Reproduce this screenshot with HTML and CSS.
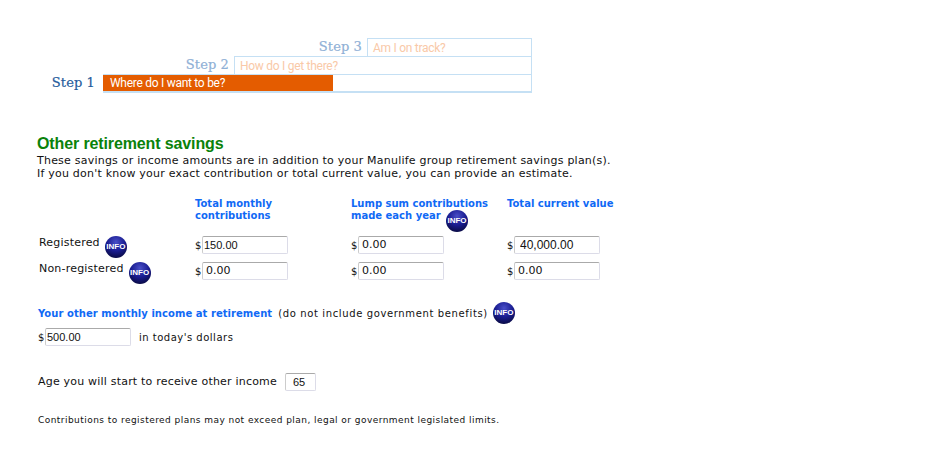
FILE: index.html
```html
<!DOCTYPE html>
<html lang="en">
<head>
<meta charset="utf-8">
<title>Other retirement savings</title>
<link rel="stylesheet" href="styles.css">
</head>
<body>
<div class="page">
  <div class="steps">
    <div class="step">
      <span class="step-label muted">Step 3</span>
      <div class="track track-3"><span class="track-text">Am I on track?</span></div>
    </div>
    <div class="step">
      <span class="step-label muted">Step 2</span>
      <div class="track track-2"><span class="track-text">How do I get there?</span></div>
    </div>
    <div class="step">
      <span class="step-label current">Step 1</span>
      <div class="track track-1"><div class="fill">Where do I want to be?</div></div>
    </div>
  </div>

  <h1 class="title">Other retirement savings</h1>
  <p class="intro">These savings or income amounts are in addition to your Manulife group retirement savings plan(s).<br>If you don't know your exact contribution or total current value, you can provide an estimate.</p>

  <div class="grid">
    <div></div>
    <div class="head">Total monthly<br>contributions</div>
    <div class="head">Lump sum contributions<br>made each year <svg class="info info-head" viewBox="0 0 22 22" role="img" aria-label="Info"><use href="#ball"/></svg><span class="info-word head-word">INFO</span></div>
    <div class="head">Total current value</div>

    <div class="label">Registered <span class="info-wrap"><svg class="info" viewBox="0 0 22 22"><use href="#ball"/></svg><span class="info-word">INFO</span></span></div>
    <div class="money"><span class="cur">$</span><input class="field tight" value="150.00"></div>
    <div class="money"><span class="cur">$</span><input class="field" value="0.00"></div>
    <div class="money"><span class="cur">$</span><input class="field wide" value="40,000.00"></div>

    <div class="label">Non-registered <span class="info-wrap"><svg class="info" viewBox="0 0 22 22"><use href="#ball"/></svg><span class="info-word">INFO</span></span></div>
    <div class="money"><span class="cur">$</span><input class="field" value="0.00"></div>
    <div class="money"><span class="cur">$</span><input class="field" value="0.00"></div>
    <div class="money"><span class="cur">$</span><input class="field" value="0.00"></div>
  </div>

  <div class="income">
    <span class="income-title">Your other monthly income at retirement</span>
    <span class="income-note">(do not include government benefits)</span>
    <span class="info-wrap"><svg class="info" viewBox="0 0 22 22"><use href="#ball"/></svg><span class="info-word">INFO</span></span>
  </div>
  <div class="income-row">
    <span class="cur">$</span><input class="field tight" value="500.00">
    <span class="today">in today's dollars</span>
  </div>

  <div class="age-row">
    <span class="age-text">Age you will start to receive other income</span>
    <input class="field age" value="65">
  </div>

  <p class="foot">Contributions to registered plans may not exceed plan, legal or government legislated limits.</p>
</div>

<svg class="defs" aria-hidden="true" width="0" height="0">
  <defs>
    <radialGradient id="ballFill" cx="50%" cy="28%" r="72%">
      <stop offset="0" stop-color="#4a4fc8"/>
      <stop offset="0.55" stop-color="#1a1d92"/>
      <stop offset="1" stop-color="#0a0b46"/>
    </radialGradient>
    <symbol id="ball" viewBox="0 0 22 22">
      <circle cx="11" cy="11" r="11" fill="url(#ballFill)"/>
    </symbol>
  </defs>
</svg>
</body>
</html>
```
FILE: styles.css
```css
html, body {
  margin: 0;
  padding: 0;
  background: #fff;
}
body {
  font-family: "DejaVu Sans", Verdana, sans-serif;
  font-size: 11px;
  color: #111;
}
.page {
  padding: 38px 0 0 37px;
  width: 800px;
}
.steps {
  width: 495px;
  display: flex;
  flex-direction: column;
  align-items: flex-end;
}
.step {
  display: flex;
  align-items: center;
  height: 18px;
}
.step:last-child { height: 19px; }
.step-label {
  font-family: "DejaVu Serif", serif;
  font-size: 13px;
  margin: -2px 5px 0 0;
  letter-spacing: 0.1px;
  white-space: nowrap;
  -webkit-text-stroke: 0.2px currentColor;
}
.current { margin-right: 8px; }
.muted { color: #8fb0d6; }
.current { color: #1f5c9c; }
.track {
  box-sizing: border-box;
  height: 100%;
  border: 1px solid #c5e0f4;
  border-bottom-width: 0;
  display: flex;
  align-items: center;
  font-family: Roboto, sans-serif;
  font-size: 12px;
  letter-spacing: -0.28px;
}
.step:last-child .track { border-bottom-width: 2px; }
.track-3 { width: 165px; }
.track-2 { width: 298px; }
.track-1 { width: 429px; }
.track-text {
  color: #f9c9a8;
  padding-left: 5px;
}
.fill {
  width: 230px;
  height: 100%;
  margin-left: -1px;
  background: #e45c00;
  color: #fff;
  padding-left: 7px;
  box-sizing: border-box;
  line-height: 17px;
}
.title {
  font-family: "Liberation Sans", Arial, sans-serif;
  font-size: 16px;
  font-weight: bold;
  letter-spacing: -0.12px;
  color: #0a820a;
  margin: 42px 0 0;
  line-height: 18px;
}
.intro {
  margin: 1px 0 0;
  line-height: 13px;
  letter-spacing: 0.22px;
  color: #111;
}
.grid {
  display: grid;
  grid-template-columns: 158px 156px 156px 156px;
  grid-template-rows: 35px 26px 26px;
  margin-top: 18px;
}
.head {
  color: #1069f5;
  font-weight: bold;
  font-size: 10px;
  line-height: 12px;
  position: relative;
  white-space: nowrap;
}
.label {
  padding: 3px 0 0 2px;
  white-space: nowrap;
  display: flex;
  align-items: flex-start;
  gap: 5px;
  height: 23px;
  letter-spacing: 0.2px;
}
.info-wrap {
  position: relative;
  display: inline-block;
  width: 22px;
  height: 22px;
  flex: none;
}
.info {
  display: block;
  width: 22px;
  height: 22px;
}
.info-word {
  position: absolute;
  left: 0;
  right: 0;
  top: 7px;
  text-align: center;
  font-family: "Liberation Sans", Arial, sans-serif;
  font-size: 8px;
  line-height: 8px;
  letter-spacing: 0;
  font-weight: bold;
  color: #fff;
}
.info-head {
  position: absolute;
  left: 95px;
  top: 12px;
}
.head-word {
  left: 95px;
  right: auto;
  width: 22px;
  top: 19px;
}
.money {
  display: flex;
  align-items: center;
  height: 19px;
  margin-top: 2px;
}
.cur {
  font-size: 10px;
  width: 7px;
  flex: none;
  padding-top: 2px;
}
.field {
  box-sizing: border-box;
  width: 86px;
  height: 18px;
  border: 1px solid #dcdce8;
  border-top-color: #aaa;
  border-left-color: #ccc;
  border-radius: 2px;
  padding: 0 0 0 3px;
  margin: 0;
  font-family: "DejaVu Sans", Verdana, sans-serif;
  font-size: 11px;
  color: #111;
  background: #fff;
  outline: none;
}
.tight { padding-left: 1px; font-family: "Liberation Sans", Arial, sans-serif; font-size: 11px; }
.wide { padding-left: 5px; font-family: "Liberation Sans", Arial, sans-serif; font-size: 12px; }
.income {
  display: flex;
  align-items: center;
  height: 22px;
  margin: 17px 0 0 1px;
  white-space: nowrap;
}
.income-title {
  color: #1069f5;
  font-weight: bold;
  font-size: 10px;
  letter-spacing: 0.05px;
}
.income-note {
  font-size: 10px;
  letter-spacing: 0.63px;
  margin: 0 5px 0 6px;
}
.income-row {
  display: flex;
  align-items: center;
  height: 19px;
  margin: 3px 0 0 1px;
}
.today {
  font-size: 10px;
  letter-spacing: 0.5px;
  margin-left: 8px;
  padding-top: 2px;
}
.age-row {
  display: flex;
  align-items: center;
  height: 19px;
  margin: 26px 0 0 1px;
  gap: 8px;
}
.age-text {
  letter-spacing: 0.2px;
}
.age {
  width: 31px;
  padding-left: 7px;
  font-family: "Liberation Sans", Arial, sans-serif;
  font-size: 11px;
}
.foot {
  font-size: 9px;
  line-height: 12px;
  letter-spacing: 0.45px;
  margin: 23px 0 0 1px;
}
.defs {
  position: absolute;
}
```
